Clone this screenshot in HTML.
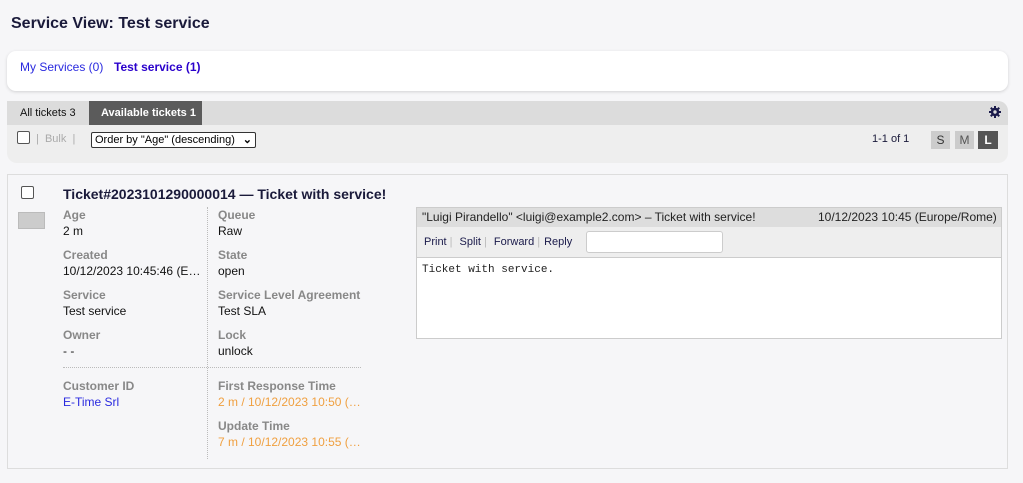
<!DOCTYPE html>
<html><head><style>
*{margin:0;padding:0;box-sizing:border-box}
body{width:1023px;height:483px;background:#f6f6f8;font-family:"Liberation Sans",sans-serif;font-size:12px;color:#000;position:relative;overflow:hidden}
.a{position:absolute;white-space:nowrap}
.lbl{color:#888;font-weight:bold;font-size:12px}
.val{color:#111;font-size:12px}
.cb{width:13px;height:13px;border:1px solid #555;border-radius:2px;background:#fff}
.sep{color:#bbb;margin:0 4px 0 3px}
</style></head><body>
<div class="a" style="left:11px;top:15px;font-size:16px;font-weight:bold;color:#1a1a3a">Service View: Test service</div>
<div class="a" style="left:7px;top:51px;width:1001px;height:40px;background:#fff;border-radius:9px;box-shadow:0 1px 3px rgba(0,0,0,.15)"></div>
<div class="a" style="left:20px;top:60px;color:#2a2adf">My Services (0)</div>
<div class="a" style="left:114px;top:60px;color:#2a00cc;font-weight:bold">Test service (1)</div>

<div class="a" style="left:7px;top:101px;width:1001px;height:62px;background:#eeeeee;border-radius:0 10px 10px 10px"></div>
<div class="a" style="left:7px;top:101px;width:1001px;height:24px;background:#dcdcdc;border-radius:0 10px 0 0"></div>
<div class="a" style="left:20px;top:107px;font-size:11px;color:#111">All tickets 3</div>
<div class="a" style="left:89px;top:101px;width:113px;height:24px;background:#5b5b5b"></div>
<div class="a" style="left:101px;top:107px;font-size:11px;color:#fff;font-weight:bold">Available tickets 1</div>
<svg class="a" style="left:989px;top:106px" width="12" height="12" viewBox="0 0 12 12"><g fill="#1a1a4a"><circle cx="6" cy="6" r="4.2"/><rect x="5" y="0" width="2" height="12"/><rect x="0" y="5" width="12" height="2"/><rect x="5" y="0" width="2" height="12" transform="rotate(45 6 6)"/><rect x="5" y="0" width="2" height="12" transform="rotate(-45 6 6)"/></g><circle cx="6" cy="6" r="1.7" fill="#dcdcdc"/></svg>
<div class="a cb" style="left:17px;top:131px"></div>
<div class="a" style="left:36px;top:133px;font-size:11px;color:#aaa">| &nbsp;Bulk &nbsp;|</div>
<div class="a" style="left:91px;top:132px;width:165px;height:16px;border:1px solid #333;border-radius:2px;background:#fff;font-size:11px;padding:1px 3px;color:#000">Order by "Age" (descending) <span style="position:absolute;right:3px;top:0;font-weight:bold">⌄</span></div>
<div class="a" style="left:872px;top:133px;font-size:11px;color:#1a1a3a">1-1 of 1</div>
<div class="a" style="left:931px;top:131px;width:19px;height:18px;background:#ccc;color:#333;font-size:12px;text-align:center;line-height:18px">S</div>
<div class="a" style="left:955px;top:131px;width:19px;height:18px;background:#ccc;color:#555;font-size:12px;text-align:center;line-height:18px">M</div>
<div class="a" style="left:978px;top:131px;width:20px;height:18px;background:#555;color:#fff;font-size:12px;text-align:center;line-height:18px;font-weight:bold">L</div>

<div class="a" style="left:7px;top:174px;width:1001px;height:295px;border:1px solid #ddd;background:#f6f6f8"></div>
<div class="a cb" style="left:21px;top:186px"></div>
<div class="a" style="left:63px;top:186px;font-size:14px;font-weight:bold;color:#1a1a3a">Ticket#2023101290000014 — Ticket with service!</div>
<div class="a" style="left:18px;top:212px;width:27px;height:17px;background:#ccc;border:1px solid #bbb"></div>

<div class="a" style="left:207px;top:207px;height:252px;border-left:1px dotted #bbb"></div>
<div class="a" style="left:63px;top:367px;width:298px;border-top:1px dotted #bbb"></div>

<div class="a lbl" style="left:63px;top:208px">Age</div><div class="a val" style="left:63px;top:224px">2 m</div>
<div class="a lbl" style="left:63px;top:248px">Created</div><div class="a val" style="left:63px;top:264px">10/12/2023 10:45:46 (E…</div>
<div class="a lbl" style="left:63px;top:288px">Service</div><div class="a val" style="left:63px;top:304px">Test service</div>
<div class="a lbl" style="left:63px;top:328px">Owner</div><div class="a val" style="left:63px;top:344px">- -</div>
<div class="a lbl" style="left:63px;top:379px">Customer ID</div><div class="a" style="left:63px;top:395px;color:#2a2adf">E-Time Srl</div>

<div class="a lbl" style="left:218px;top:208px">Queue</div><div class="a val" style="left:218px;top:224px">Raw</div>
<div class="a lbl" style="left:218px;top:248px">State</div><div class="a val" style="left:218px;top:264px">open</div>
<div class="a lbl" style="left:218px;top:288px">Service Level Agreement</div><div class="a val" style="left:218px;top:304px">Test SLA</div>
<div class="a lbl" style="left:218px;top:328px">Lock</div><div class="a val" style="left:218px;top:344px">unlock</div>
<div class="a lbl" style="left:218px;top:379px">First Response Time</div><div class="a" style="left:218px;top:395px;color:#f0a040">2 m / 10/12/2023 10:50 (…</div>
<div class="a lbl" style="left:218px;top:419px">Update Time</div><div class="a" style="left:218px;top:435px;color:#f0a040">7 m / 10/12/2023 10:55 (…</div>

<div class="a" style="left:416px;top:207px;width:586px;height:132px;border:1px solid #ccc;background:#fff"></div>
<div class="a" style="left:417px;top:208px;width:584px;height:19px;background:#ddd"></div>
<div class="a" style="left:422px;top:210px;color:#222">"Luigi Pirandello" &lt;luigi@example2.com&gt; – Ticket with service!</div>
<div class="a" style="left:818px;top:210px;color:#222">10/12/2023 10:45 (Europe/Rome)</div>
<div class="a" style="left:417px;top:227px;width:584px;height:31px;background:#eee;border-bottom:1px solid #ccc"></div>
<div class="a" style="left:424px;top:236px;font-size:11px;color:#1a1a4a">Print<span class="sep">|</span> Split<span class="sep">|</span> Forward<span class="sep">|</span>Reply</div>
<div class="a" style="left:586px;top:231px;width:137px;height:22px;background:#fff;border:1px solid #ccc;border-radius:3px"></div>
<div class="a" style="left:422px;top:264px;font-family:'Liberation Mono',monospace;font-size:11px;color:#222">Ticket with service.</div>
</body></html>
